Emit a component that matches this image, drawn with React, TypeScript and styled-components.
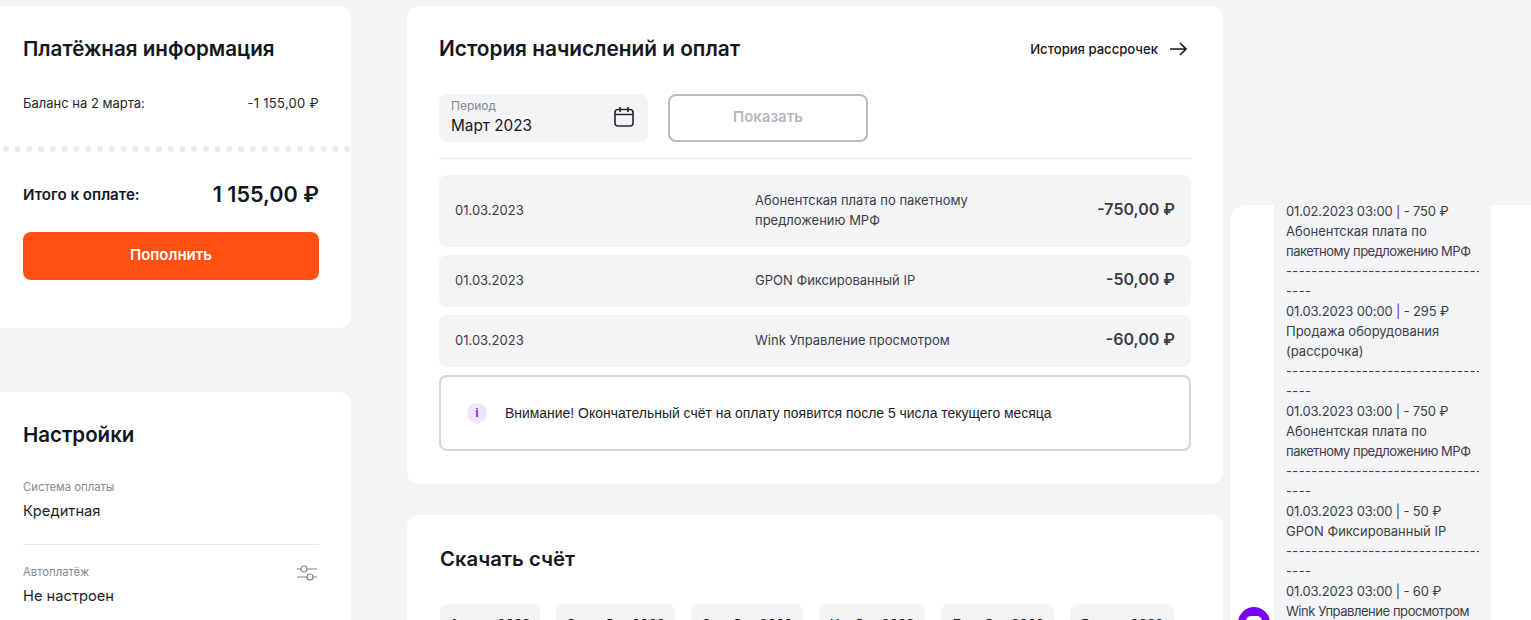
import React from "react"
import styled, { createGlobalStyle } from "styled-components"

const GlobalStyle = createGlobalStyle`
  html, body {
    margin: 0;
    padding: 0;
    height: 620px;
    overflow: hidden;
    background: #f3f4f6;
    font-family: Inter, "Noto Sans", sans-serif;
    color: #14171f;
  }
  * { box-sizing: border-box; }
`

const Page = styled.div`
  display: flex;
  align-items: flex-start;
  width: 1531px;
  height: 620px;
  overflow: hidden;
`

const LeftColumn = styled.div`
  flex: 0 0 375px;
  margin: 6px 56px 0 -24px;
  display: flex;
  flex-direction: column;
  gap: 64px;
`

const CenterColumn = styled.div`
  flex: 0 0 816px;
  margin: 6px 7px 0 0;
  display: flex;
  flex-direction: column;
  gap: 31px;
`

const Card = styled.section`
  background: #fff;
  border-radius: 12px;
`

const SideCard = styled(Card)`
  padding: 29px 32px 48px 47px;
`

const Title = styled.h2<{ $size: number }>`
  margin: 0;
  font-size: ${(p) => p.$size}px;
  line-height: 28px;
  font-weight: 600;
`

const BalanceRow = styled.div`
  display: flex;
  justify-content: space-between;
  margin-top: 30px;
  font-size: 13px;
  line-height: 20px;
  color: #23262e;
`

const BalanceSum = styled.span`
  letter-spacing: 0.3px;
`

const Dots = styled.div`
  height: 6px;
  margin: 33px -32px 0 -47px;
  background-image: radial-gradient(circle, #eaecf0 3px, transparent 3.2px);
  background-size: 11.77px 6px;
  background-position: 24px 0;
`

const TotalRow = styled.div`
  display: flex;
  justify-content: space-between;
  align-items: center;
  margin-top: 26px;
  height: 32px;
`

const TotalLabel = styled.span`
  font-size: 15.1px;
  font-weight: 600;
`

const TotalSum = styled.span`
  font-size: 21.6px;
  font-weight: 600;
`

const PayButton = styled.button`
  display: block;
  width: 100%;
  height: 48px;
  margin-top: 22px;
  padding: 0 0 4px;
  border: 0;
  border-radius: 8px;
  background: #ff4f12;
  color: #fff;
  font: 600 15px Inter, sans-serif;
`

const SettingsCard = styled(Card)`
  padding: 29px 32px 24px 47px;
`

const Setting = styled.div<{ $ruled?: boolean }>`
  position: relative;
  padding-top: ${(p) => (p.$ruled ? "19px" : "0")};
  margin-top: ${(p) => (p.$ruled ? "22px" : "30px")};
  border-top: ${(p) => (p.$ruled ? "1px solid #e9eaee" : "0")};
`

const SettingLabel = styled.div`
  font-size: 11.3px;
  line-height: 16px;
  color: #858992;
`

const SettingValue = styled.div`
  margin-top: 5px;
  font-size: 14.7px;
  line-height: 22px;
  color: #1b1e25;
`

const SettingIcon = styled.svg`
  position: absolute;
  right: 2px;
  top: 20px;
  width: 20px;
  height: 16px;
`

const MainCard = styled(Card)`
  padding: 29px 32px 33px;
`

const HistoryHead = styled.div`
  display: flex;
  justify-content: space-between;
  align-items: center;
  height: 28px;
`

const HistoryLink = styled.a`
  display: flex;
  align-items: center;
  gap: 12px;
  margin-right: 4px;
  font-size: 13.1px;
  font-weight: 500;
  color: #14171f;
`

const Filter = styled.div`
  display: flex;
  gap: 20px;
  margin-top: 31px;
  padding-bottom: 16px;
  border-bottom: 1px solid #e9eaee;
`

const PeriodBox = styled.div`
  position: relative;
  width: 209px;
  height: 48px;
  padding: 5px 12px;
  border-radius: 8px;
  background: #f3f4f6;
`

const PeriodLabel = styled.div`
  font-size: 12px;
  line-height: 14px;
  color: #858992;
`

const PeriodValue = styled.div`
  margin-top: 2px;
  font-size: 15.3px;
  line-height: 22px;
`

const CalendarIcon = styled.svg`
  position: absolute;
  right: 13px;
  top: 12px;
  width: 22px;
  height: 22px;
`

const ShowButton = styled.button`
  width: 200px;
  height: 48px;
  padding: 0 0 4px;
  border: 2px solid #b9bcc3;
  border-radius: 8px;
  background: #fff;
  color: #b4b7bf;
  font: 600 15px Inter, sans-serif;
`

const Rows = styled.div`
  display: flex;
  flex-direction: column;
  gap: 8px;
  margin-top: 16px;
`

const Row = styled.div<{ $tall?: boolean }>`
  display: grid;
  grid-template-columns: 300px 1fr auto;
  align-items: center;
  height: ${(p) => (p.$tall ? "72px" : "52px")};
  padding: 0 16px 2px;
  border-radius: 8px;
  background: #f3f4f6;
  font-size: 13px;
  line-height: 20px;
  color: #3a3e48;
`

const RowDesc = styled.div`
  max-width: 240px;
`

const RowSum = styled.div`
  margin-bottom: 2px;
  font-size: 16px;
  font-weight: 600;
`

const Notice = styled.div`
  display: flex;
  align-items: center;
  gap: 18px;
  height: 76px;
  margin-top: 8px;
  padding: 0 26px;
  border: 2px solid #d5d6da;
  border-radius: 8px;
  font-family: "Liberation Sans", Arial, sans-serif;
  font-size: 13.95px;
  color: #1b1e25;
`

const InfoDot = styled.span`
  display: flex;
  align-items: center;
  justify-content: center;
  width: 20px;
  height: 20px;
  border-radius: 50%;
  background: #efe4fb;
  color: #7a18e0;
  font-size: 12px;
  font-weight: 700;
`

const DownloadCard = styled(Card)`
  padding: 30px 33px 0;
  height: 160px;
`

const Tabs = styled.div`
  display: flex;
  gap: 16px;
  margin-top: 31px;
`

const Tab = styled.div<{ $w: number }>`
  width: ${(p) => p.$w}px;
  height: 48px;
  padding-top: 12px;
  border-radius: 8px;
  background: #f3f4f6;
  text-align: center;
  font-size: 13px;
  font-weight: 600;
  white-space: nowrap;
`

const ChatPanel = styled.aside`
  flex: 1;
  height: 415px;
  margin-top: 205px;
  overflow: hidden;
  background: #fff;
  border-top-left-radius: 16px;
`

const ChatRow = styled.div`
  display: flex;
  align-items: flex-end;
  gap: 4px;
  margin-top: -4px;
  padding-left: 8px;
`

const Avatar = styled.svg`
  flex: 0 0 32px;
  width: 32px;
  height: 32px;
`

const Bubble = styled.div`
  width: 217px;
  padding: 0 12px 18px;
  background: #f3f4f6;
  font-size: 13px;
  line-height: 20px;
  color: #3a3e48;
`

const BubbleLine = styled.div<{ $track: number }>`
  white-space: nowrap;
  letter-spacing: ${(p) => p.$track}px;
`

const Dashes = styled.div`
  overflow: hidden;
  white-space: nowrap;
  letter-spacing: 0.35px;
`

const history = [
  { desc: "Абонентская плата по пакетному предложению МРФ", sum: "-750,00 ₽", tall: true },
  { desc: "GPON Фиксированный IP", sum: "-50,00 ₽" },
  { desc: "Wink Управление просмотром", sum: "-60,00 ₽" },
]

const months = [
  { name: "Август 2022", w: 100 },
  { name: "Сентябрь 2022", w: 119 },
  { name: "Октябрь 2022", w: 112 },
  { name: "Ноябрь 2022", w: 106 },
  { name: "Декабрь 2022", w: 113 },
  { name: "Январь 2023", w: 104 },
]

const messages = [
  ["01.02.2023 03:00 | - 750 ₽", "Абонентская плата по", "пакетному предложению МРФ"],
  ["01.03.2023 00:00 | - 295 ₽", "Продажа оборудования", "(рассрочка)"],
  ["01.03.2023 03:00 | - 750 ₽", "Абонентская плата по", "пакетному предложению МРФ"],
  ["01.03.2023 03:00 | - 50 ₽", "GPON Фиксированный IP"],
  ["01.03.2023 03:00 | - 60 ₽", "Wink Управление просмотром"],
]

// Inter runs wider than the original font on some of these lines
const tracking = (line: string) => {
  if (line.startsWith("пакетному")) return -0.5
  if (line.startsWith("Wink")) return -0.45
  if (line.includes("|")) return -0.15
  return 0
}

const App = () => {
  return (
    <Page>
      <GlobalStyle />
      <LeftColumn>
        <SideCard>
          <Title $size={20.6}>Платёжная информация</Title>
          <BalanceRow>
            <span>Баланс на 2 марта:</span>
            <BalanceSum>-1 155,00 ₽</BalanceSum>
          </BalanceRow>
          <Dots />
          <TotalRow>
            <TotalLabel>Итого к оплате:</TotalLabel>
            <TotalSum>1 155,00 ₽</TotalSum>
          </TotalRow>
          <PayButton>Пополнить</PayButton>
        </SideCard>
        <SettingsCard>
          <Title $size={20.5}>Настройки</Title>
          <Setting>
            <SettingLabel>Система оплаты</SettingLabel>
            <SettingValue>Кредитная</SettingValue>
          </Setting>
          <Setting $ruled>
            <SettingLabel>Автоплатёж</SettingLabel>
            <SettingValue>Не настроен</SettingValue>
            <SettingIcon viewBox="0 0 20 16" fill="none" stroke="#7d8088" strokeWidth="1.2">
              <path d="M0 4h4M10 4h10M0 12h10M16 12h4" />
              <circle cx="7" cy="4" r="3" />
              <circle cx="13" cy="12" r="3" />
            </SettingIcon>
          </Setting>
        </SettingsCard>
      </LeftColumn>

      <CenterColumn>
        <MainCard>
          <HistoryHead>
            <Title $size={20.8}>История начислений и оплат</Title>
            <HistoryLink>
              История рассрочек
              <svg width="17" height="14" viewBox="0 0 17 14" fill="none" stroke="#14171f" strokeWidth="1.6">
                <path d="M0 7h16M10 1l6 6-6 6" />
              </svg>
            </HistoryLink>
          </HistoryHead>
          <Filter>
            <PeriodBox>
              <PeriodLabel>Период</PeriodLabel>
              <PeriodValue>Март 2023</PeriodValue>
              <CalendarIcon viewBox="0 0 22 22" fill="none" stroke="#23262e" strokeWidth="1.6">
                <rect x="2" y="3.5" width="18" height="16.5" rx="3" />
                <path d="M2 8.5h18M7 1v5M15 1v5" />
              </CalendarIcon>
            </PeriodBox>
            <ShowButton>Показать</ShowButton>
          </Filter>
          <Rows>
            {history.map((item) => (
              <Row key={item.desc} $tall={item.tall}>
                <span>01.03.2023</span>
                <RowDesc>{item.desc}</RowDesc>
                <RowSum>{item.sum}</RowSum>
              </Row>
            ))}
          </Rows>
          <Notice>
            <InfoDot>i</InfoDot>
            Внимание! Окончательный счёт на оплату появится после 5 числа текущего месяца
          </Notice>
        </MainCard>
        <DownloadCard>
          <Title $size={20.3}>Скачать счёт</Title>
          <Tabs>
            {months.map((m) => (
              <Tab key={m.name} $w={m.w}>
                {m.name}
              </Tab>
            ))}
          </Tabs>
        </DownloadCard>
      </CenterColumn>

      <ChatPanel>
        <ChatRow>
          <Avatar viewBox="0 0 32 32">
            <circle cx="16" cy="16" r="16" fill="#7a00f5" />
            <rect x="8" y="9" width="16" height="13" rx="5" fill="#fff" />
          </Avatar>
          <Bubble>
            {messages.map((lines, i) => (
              <div key={i}>
                {lines.map((line) => (
                  <BubbleLine key={line} $track={tracking(line)}>
                    {line}
                  </BubbleLine>
                ))}
                {i < messages.length - 1 && (
                  <>
                    <Dashes>---------------------------------</Dashes>
                    <Dashes>----</Dashes>
                  </>
                )}
              </div>
            ))}
          </Bubble>
        </ChatRow>
      </ChatPanel>
    </Page>
  )
}

export default App
